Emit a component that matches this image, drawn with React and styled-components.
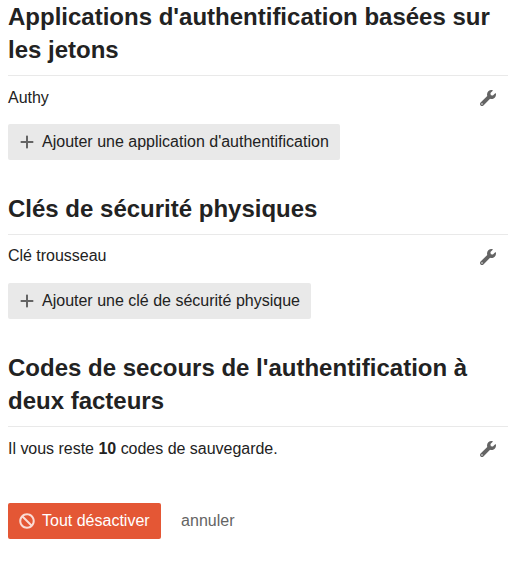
import React from 'react'
import styled, { createGlobalStyle } from 'styled-components'
import { FaBan, FaWrench } from 'react-icons/fa'
import { FaPlus } from 'react-icons/fa6'

const sections = [
    {
        title: "Applications d'authentification basées sur les jetons",
        item: 'Authy',
        add: "Ajouter une application d'authentification",
    },
    {
        title: 'Clés de sécurité physiques',
        item: 'Clé trousseau',
        add: 'Ajouter une clé de sécurité physique',
        raised: true,
    },
    {
        title: "Codes de secours de l'authentification à deux facteurs",
        item: <>Il vous reste <b>10</b> codes de sauvegarde.</>,
    },
]

const App = () => {
    return (
        <Container>
            <GlobalStyle />
            {sections.map(({title, item, add, raised}) => (
                <Section key={title}>
                    <Title>{title}</Title>
                    <Row>
                        <Label $raised={raised}>{item}</Label>
                        <EditButton aria-label='Modifier'><FaWrench size={16} /></EditButton>
                    </Row>
                    {add && <Button><FaPlus size={16} />{add}</Button>}
                </Section>
            ))}
            <Actions>
                <Button $danger><FaBan size={16} />Tout désactiver</Button>
                <Cancel href='#'>annuler</Cancel>
            </Actions>
        </Container>
    )
}

export default App


const GlobalStyle = createGlobalStyle`
    body {
        margin: 0;
        background: #fff;
        color: #222;
        font-family: 'Liberation Sans', Arial, sans-serif;
        font-size: 16px;
    }
`;

const Container = styled.main`
    padding: 0 23px 0 8px;
`;

const Section = styled.section`
    margin-bottom: 32px;
`;

const Title = styled.h3`
    margin: 0;
    padding-bottom: 9px;
    border-bottom: 1px solid #e9e9e9;
    font-size: 24px;
    font-weight: 700;
    line-height: 33px;
`;

const Row = styled.div`
    display: flex;
    align-items: center;
    justify-content: space-between;
    height: 44px;
    margin-bottom: 4px;
    padding-right: 12px;
    line-height: 22px;
`;

const Label = styled.span`
    padding-bottom: ${({$raised}) => $raised ? '2px' : 0};
    letter-spacing: -0.02px;
`;

const EditButton = styled.button`
    display: flex;
    padding: 0;
    border: 0;
    background: none;
    color: #646464;
`;

const Button = styled.button`
    display: inline-flex;
    align-items: center;
    gap: 7px;
    height: 36px;
    padding: 0 11px;
    border: 0;
    border-radius: 2px;
    background: ${({$danger}) => $danger ? '#e45735' : '#e9e9e9'};
    color: ${({$danger}) => $danger ? '#fff' : '#222'};
    font: inherit;
    line-height: 20px;
    white-space: nowrap;

    svg {
        flex: none;
        color: ${({$danger}) => $danger ? '#fadcd5' : '#646464'};
    }
`;

const Actions = styled.div`
    display: flex;
    align-items: center;
    gap: 20.5px;
    line-height: 20px;
`;

const Cancel = styled.a`
    color: #646464;
    text-decoration: none;
`;
